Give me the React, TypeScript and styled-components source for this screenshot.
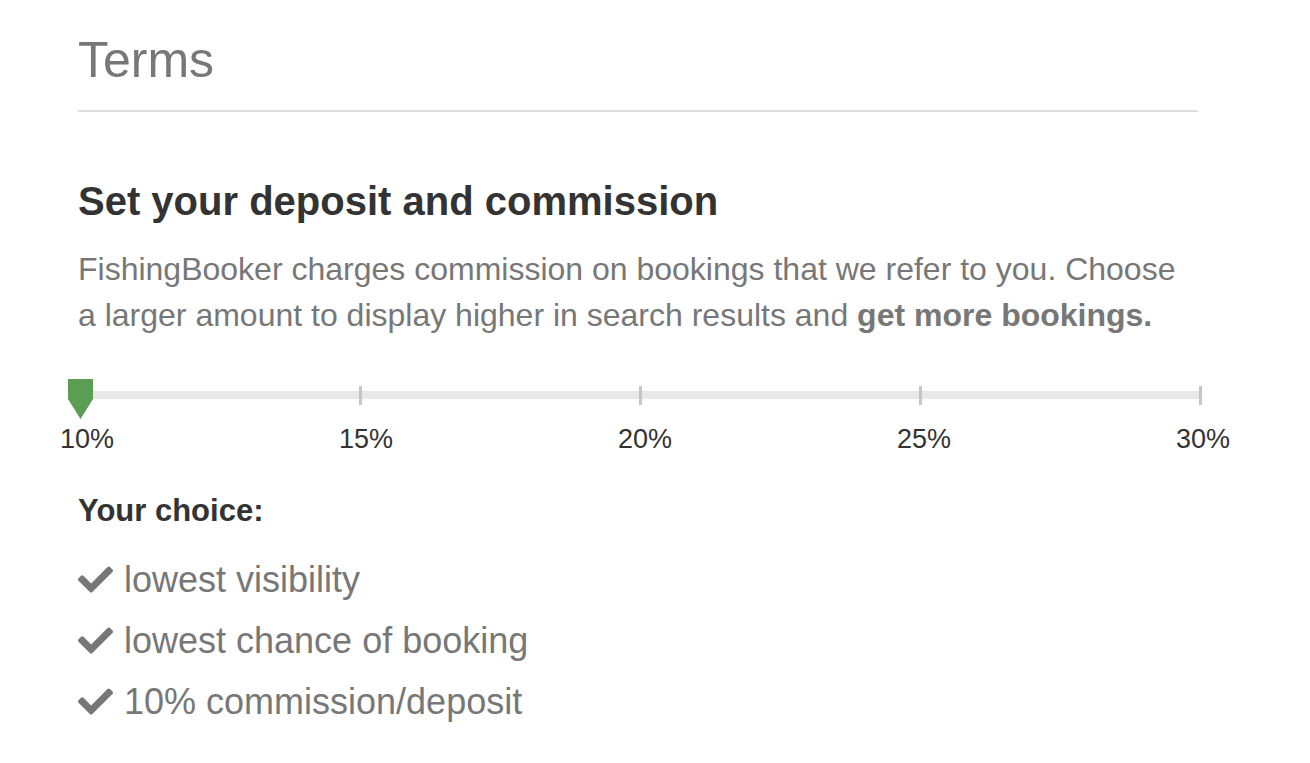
import React from "react";
import styled, { createGlobalStyle } from "styled-components";
import { FaCheck } from "react-icons/fa";

const GlobalStyle = createGlobalStyle`
  html, body {
    margin: 0;
    padding: 0;
    background: #fff;
  }
  body {
    font-family: "Liberation Sans", Arial, Helvetica, sans-serif;
  }
`;

const Page = styled.div`
  width: 1120px;
  padding: 35px 0 40px 78px;
`;

const Title = styled.h1`
  margin: 0;
  font-size: 50px;
  line-height: 50px;
  font-weight: 400;
  color: #777;
`;

const Divider = styled.hr`
  margin: 25px 0 0;
  border: 0;
  height: 2px;
  background: #dedede;
`;

const Heading = styled.h2`
  margin: 69px 0 0;
  font-size: 40px;
  line-height: 40px;
  font-weight: 700;
  color: #333;
`;

const Intro = styled.p`
  margin: 25px 0 0;
  font-size: 32px;
  line-height: 46px;
  color: #777;

  strong {
    font-weight: 700;
  }
`;

const SliderWrap = styled.div`
  position: relative;
  margin: 41px 0 0 1px;
  padding-top: 12px;
  width: 1123px;
`;

const Track = styled.div`
  height: 8px;
  background: #e8e8e8;
  display: flex;
  justify-content: space-between;
  align-items: center;
`;

const Tick = styled.span`
  width: 3px;
  height: 19px;
  background: #c6c6c6;
`;

const Handle = styled.svg`
  position: absolute;
  left: -11px;
  top: 0;
`;

const Labels = styled.div`
  display: flex;
  justify-content: space-between;
  width: 1170px;
  margin: 27px 0 0 -18px;
  font-size: 27px;
  line-height: 27px;
  color: #333;
`;

const Choice = styled.h3`
  margin: 42px 0 0;
  font-size: 31px;
  line-height: 31px;
  font-weight: 700;
  color: #333;
`;

const List = styled.ul`
  list-style: none;
  margin: 23px 0 0;
  padding: 0;
`;

const Item = styled.li`
  display: flex;
  align-items: center;
  gap: 11px;
  height: 61px;
  font-size: 36px;
  color: #777;

  svg {
    flex: none;
  }
`;

const steps = ["10%", "15%", "20%", "25%", "30%"];
const choices = ["lowest visibility", "lowest chance of booking", "10% commission/deposit"];

export default function App() {
  return (
    <>
      <GlobalStyle />
      <Page>
        <Title>Terms</Title>
        <Divider />
        <Heading>Set your deposit and commission</Heading>
        <Intro>
          FishingBooker charges commission on bookings that we refer to you. Choose a larger amount to display
          higher in search results and <strong>get more bookings.</strong>
        </Intro>
        <SliderWrap>
          <Track>
            {steps.map((s) => (
              <Tick key={s} />
            ))}
          </Track>
          <Handle width="25" height="40" viewBox="0 0 25 40">
            <path d="M0 0H25V20L12.5 40L0 20Z" fill="#5b9d52" />
          </Handle>
        </SliderWrap>
        <Labels>
          {steps.map((s) => (
            <span key={s}>{s}</span>
          ))}
        </Labels>
        <Choice>Your choice:</Choice>
        <List>
          {choices.map((c) => (
            <Item key={c}>
              <FaCheck size={35} color="#777" />
              <span>{c}</span>
            </Item>
          ))}
        </List>
      </Page>
    </>
  );
}
